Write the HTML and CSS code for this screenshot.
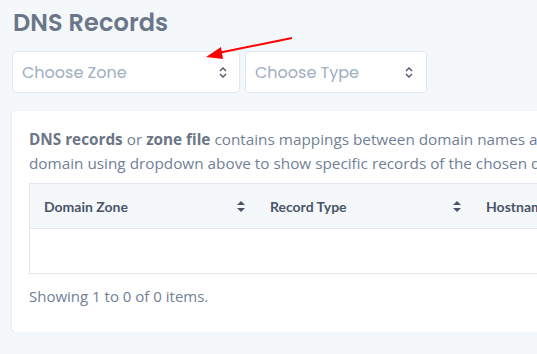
FILE: index.html
```html
<!DOCTYPE html>
<html>
<head>
    <meta charset="UTF-8">
    <link rel="stylesheet" href="styles.css">
</head>
<body>
    <div class="page">
        <h1 class="title">DNS Records</h1>
        <div class="filters">
            <div class="select zone">
                <span>Choose Zone</span>
                <svg class="chev" width="8" height="11" viewBox="0 0 8 11"><path d="M1 4 L4 1 L7 4 M1 7 L4 10 L7 7" fill="none" stroke="#4a5568" stroke-width="1.4"/></svg>
            </div>
            <div class="select type">
                <span>Choose Type</span>
                <svg class="chev" width="8" height="11" viewBox="0 0 8 11"><path d="M1 4 L4 1 L7 4 M1 7 L4 10 L7 7" fill="none" stroke="#4a5568" stroke-width="1.4"/></svg>
            </div>
        </div>
        <div class="card">
            <p class="intro"><b>DNS records</b> or <b>zone file</b> contains mappings between domain names and IP addresses. Choose a<br>domain using dropdown above to show specific records of the chosen domain.</p>
            <div class="table">
                <div class="row head">
                    <div class="cell c1">Domain Zone <i class="sort"></i></div>
                    <div class="cell c2">Record Type <i class="sort"></i></div>
                    <div class="cell c3">Hostname <i class="sort"></i></div>
                </div>
                <div class="row empty"></div>
            </div>
            <p class="summary">Showing 1 to 0 of 0 items.</p>
        </div>
        <!-- flecha roja de la captura -->
        <svg class="arrow" width="100" height="40" viewBox="0 0 100 40">
            <line x1="96" y1="6" x2="22" y2="21" stroke="#ff0000" stroke-width="2"/>
            <polygon points="10,25 25,15 27,27" fill="#ff0000"/>
        </svg>
    </div>
</body>
</html>
```

FILE: styles.css
```css
body {
    margin: 0;
    background-color: #f5f8fb;
    font-family: "Open Sans", "Lato", sans-serif;
    overflow: hidden;
}

.page {
    position: relative;
    width: 560px;
    padding: 0 0 0 12px;
}

.title {
    margin: 0;
    padding: 5px 0 0 1px;
    height: 51px;
    box-sizing: border-box;
    font-family: "Poppins", "Inter", sans-serif;
    font-weight: 600;
    font-size: 24px;
    color: #6b7689;
    letter-spacing: 0.1px;
}

.filters {
    display: flex;
    gap: 5px;
}

.select {
    height: 42px;
    box-sizing: border-box;
    background-color: #fff;
    border: 1px solid #e2e8f0;
    border-radius: 4px;
    display: flex;
    align-items: center;
    justify-content: space-between;
    padding: 0 12px 0 9px;
    font-family: "Poppins", "Inter", sans-serif;
    font-size: 16px;
    color: #a0aec0;
}

    .select.zone {
        width: 228px;
    }

    .select.type {
        width: 182px;
        padding-right: 13px;
    }

.card {
    margin-top: 18px;
    width: 560px;
    height: 221px;
    box-sizing: border-box;
    background-color: #fff;
    border-radius: 4px;
    box-shadow: 0 1px 3px rgba(0, 0, 0, 0.1), 0 1px 1px rgba(0, 0, 0, 0.05);
    padding: 16px 0 0 17px;
    overflow: hidden;
}

.intro {
    margin: 0;
    white-space: nowrap;
    font-size: 15.3px;
    line-height: 24px;
    color: #718096;
}

    .intro b {
        color: #6b7586;
        font-weight: 700;
    }

.table {
    margin-top: 8px;
    border: 1px solid #e2e8f0;
    border-right: none;
    width: 600px;
}

.row {
    display: flex;
}

    .row.head {
        height: 44px;
        background-color: #f5f8fb;
        border-bottom: 1px solid #e2e8f0;
    }

    .row.empty {
        height: 44px;
    }

.cell {
    display: flex;
    align-items: center;
    justify-content: space-between;
    padding: 0 11px 0 14px;
    box-sizing: border-box;
    font-family: "Lato", sans-serif;
    font-size: 14px;
    font-weight: 700;
    color: #4a5568;
}

    .cell.c1 {
        width: 229px;
    }

    .cell.c2 {
        width: 219px;
    }

    .cell.c3 {
        width: 160px;
    }

.sort {
    width: 8px;
    height: 11px;
    position: relative;
}

    .sort::before,
    .sort::after {
        content: "";
        position: absolute;
        left: 0;
        border-left: 4px solid transparent;
        border-right: 4px solid transparent;
    }

    .sort::before {
        top: 0;
        border-bottom: 4px solid #4a5568;
    }

    .sort::after {
        bottom: 0;
        border-top: 4px solid #4a5568;
    }

.summary {
    margin: 12px 0 0;
    font-size: 15px;
    color: #718096;
}

.arrow {
    position: absolute;
    left: 196px;
    top: 32px;
}
```
